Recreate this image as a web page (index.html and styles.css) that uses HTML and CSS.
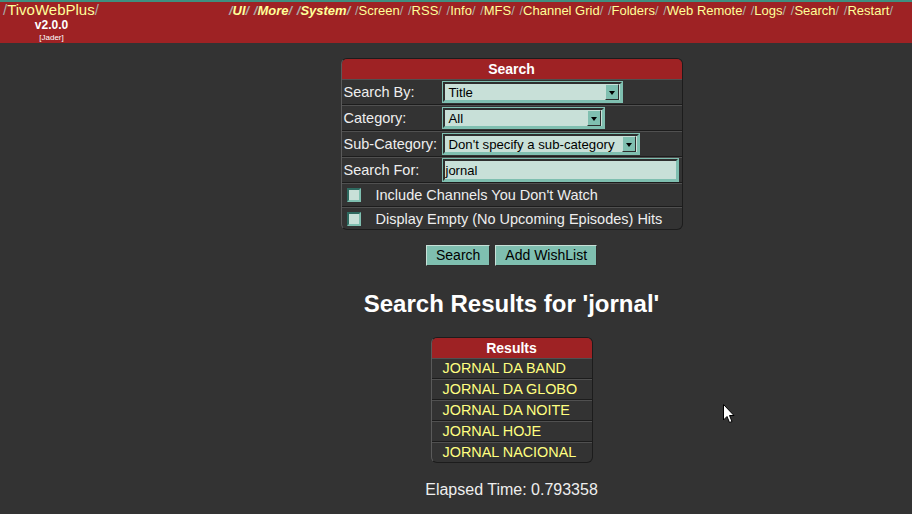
FILE: index.html
```html
<!DOCTYPE html>
<html lang="en">
<head>
    <meta charset="UTF-8">
    <title>TivoWebPlus - Search</title>
    <link rel="stylesheet" href="styles.css">
</head>
<body>
    <div class="header">
        <div class="brand">
            <div class="title"><span class="sl">/</span>TivoWebPlus<span class="sl">/</span></div>
            <div class="version">v2.0.0</div>
            <div class="user">[Jader]</div>
        </div>
        <div class="nav">
            <a class="strong"><span class="sl">/</span>UI<span class="sl">/</span></a>
            <a class="strong"><span class="sl">/</span>More<span class="sl">/</span></a>
            <a class="strong"><span class="sl">/</span>System<span class="sl">/</span></a>
            <a><span class="sl">/</span>Screen<span class="sl">/</span></a>
            <a><span class="sl">/</span>RSS<span class="sl">/</span></a>
            <a><span class="sl">/</span>Info<span class="sl">/</span></a>
            <a><span class="sl">/</span>MFS<span class="sl">/</span></a>
            <a><span class="sl">/</span>Channel Grid<span class="sl">/</span></a>
            <a><span class="sl">/</span>Folders<span class="sl">/</span></a>
            <a><span class="sl">/</span>Web Remote<span class="sl">/</span></a>
            <a><span class="sl">/</span>Logs<span class="sl">/</span></a>
            <a><span class="sl">/</span>Search<span class="sl">/</span></a>
            <a><span class="sl">/</span>Restart<span class="sl">/</span></a>
        </div>
    </div>

    <div class="main">
        <div class="box search-box">
            <div class="box-head">Search</div>
            <div class="row">
                <div class="label">Search By:</div>
                <div class="select w-title"><span class="val">Title</span><span class="arrow"></span></div>
            </div>
            <div class="row">
                <div class="label">Category:</div>
                <div class="select w-cat"><span class="val">All</span><span class="arrow"></span></div>
            </div>
            <div class="row">
                <div class="label">Sub-Category:</div>
                <div class="select w-sub"><span class="val">Don't specify a sub-category</span><span class="arrow"></span></div>
            </div>
            <div class="row">
                <div class="label">Search For:</div>
                <div class="input">jornal</div>
            </div>
            <div class="row check-row">
                <span class="check"></span>
                <span>Include Channels You Don't Watch</span>
            </div>
            <div class="row check-row last">
                <span class="check"></span>
                <span>Display Empty (No Upcoming Episodes) Hits</span>
            </div>
        </div>

        <div class="buttons">
            <span class="btn">Search</span>
            <span class="btn">Add WishList</span>
        </div>

        <h2>Search Results for 'jornal'</h2>

        <div class="box results-box">
            <div class="box-head">Results</div>
            <div class="result">JORNAL DA BAND</div>
            <div class="result">JORNAL DA GLOBO</div>
            <div class="result">JORNAL DA NOITE</div>
            <div class="result">JORNAL HOJE</div>
            <div class="result last">JORNAL NACIONAL</div>
        </div>

        <p class="elapsed">Elapsed Time: 0.793358</p>
    </div>

    <svg class="cursor" width="12" height="20" viewBox="0 0 12 20">
        <path d="M0.5 0.5 L0.5 16 L4 12.5 L6.5 18.5 L9 17.5 L6.5 11.5 L11 11.5 Z" fill="#fff" stroke="#000" stroke-width="1"/>
    </svg>
</body>
</html>
```

FILE: styles.css
```css
body {
    margin: 0;
    padding: 0;
    background-color: #333333;
    color: #eeeeee;
    font-family: "Liberation Sans", Arial, sans-serif;
    overflow: hidden;
}

.header {
    display: flex;
    justify-content: space-between;
    align-items: flex-start;
    height: 41px;
    background-color: #9e2224;
    border-top: 2px solid #3f8f80;
}

.sl {
    color: #a9a9a9;
}

.brand {
    width: 100px;
    padding-left: 3px;
    text-align: center;
}

.brand .title {
    font-size: 15px;
    line-height: 16px;
    color: #ffff99;
    text-align: left;
}

.brand .version {
    font-size: 12px;
    font-weight: bold;
    color: #ffffff;
    line-height: 14px;
    margin-left: -3px;
}

.brand .user {
    font-size: 8px;
    color: #ffffff;
    line-height: 10px;
    margin-top: 1px;
    margin-left: -3px;
}

.nav {
    padding-right: 19px;
    font-size: 13px;
    line-height: 18px;
    color: #ffff99;
}

.nav a {
    margin-left: 1px;
}

.nav a.strong {
    font-weight: bold;
    font-style: italic;
}

.main {
    padding-left: 111px;
    display: flex;
    flex-direction: column;
    align-items: center;
}

.box {
    background-color: #333333;
    border: 1px solid #1c1c1c;
    border-left-color: #5a5a5a;
    border-radius: 6px;
    overflow: hidden;
}

.box-head {
    background-color: #9e2224;
    color: #ffffff;
    font-weight: bold;
    font-size: 14px;
    text-align: center;
    height: 20px;
    line-height: 20px;
}

.search-box {
    width: 340px;
    margin-top: 15px;
}

.row {
    display: flex;
    align-items: center;
    height: 24px;
    border-top: 1px solid #505050;
    border-bottom: 1px solid #1c1c1c;
    font-size: 14.5px;
    padding-left: 2px;
}

.row.last,
.result.last {
    border-bottom: none;
}

.label {
    width: 99px;
    white-space: nowrap;
}

.select,
.input {
    display: flex;
    align-items: center;
    height: 16px;
    background-color: #c8e0d8;
    border: 2px solid #7fbfb0;
    border-top-color: #2e2e2e;
    border-left-color: #2e2e2e;
    box-shadow: 0 0 0 1px #7fbfb0;
    color: #000000;
    font-size: 13.2px;
}

.select .val {
    flex: 1;
    padding-left: 4px;
    white-space: nowrap;
}

.select .arrow {
    position: relative;
    width: 12px;
    height: 14px;
    margin-right: 1px;
    background-color: #7fbfb0;
    border: 1px solid #2e2e2e;
    border-top-color: #c8e0d8;
    border-left-color: #c8e0d8;
}

.select .arrow::after {
    content: "";
    position: absolute;
    left: 3px;
    top: 6px;
    border-left: 3px solid transparent;
    border-right: 3px solid transparent;
    border-top: 4px solid #000000;
}

.w-title { width: 175px; }
.w-cat { width: 157px; }
.w-sub { width: 192px; }

.input {
    width: 230px;
    height: 18px;
    padding-left: 1px;
    font-size: 13px;
}

.check-row {
    height: 22px;
    padding-left: 5px;
}

.check-row.last {
    height: 21px;
}

.check {
    width: 10px;
    height: 10px;
    margin-right: 15px;
    background-color: #c8e0d8;
    border: 2px solid #7fbfb0;
    border-top-color: #2e6a60;
    border-left-color: #2e6a60;
}

.buttons {
    display: flex;
    gap: 5px;
    margin-top: 15px;
}

.btn {
    display: inline-block;
    height: 19px;
    line-height: 19px;
    padding: 0 9px;
    background-color: #7fbfb0;
    color: #000000;
    font-size: 14px;
    border: 1px solid #2e2e2e;
    border-top-color: #c8e0d8;
    border-left-color: #c8e0d8;
}

h2 {
    margin: 24px 0 0;
    font-size: 24px;
    line-height: 28px;
    color: #ffffff;
}

.results-box {
    width: 160px;
    margin-top: 19px;
}

.result {
    height: 19px;
    line-height: 19px;
    padding-left: 11px;
    font-size: 14.4px;
    color: #ffff80;
    border-top: 1px solid #505050;
    border-bottom: 1px solid #1c1c1c;
}

.elapsed {
    margin: 18px 0 0;
    font-size: 16px;
    line-height: 18px;
    color: #eeeeee;
}

.cursor {
    position: absolute;
    left: 723px;
    top: 404px;
}
```
